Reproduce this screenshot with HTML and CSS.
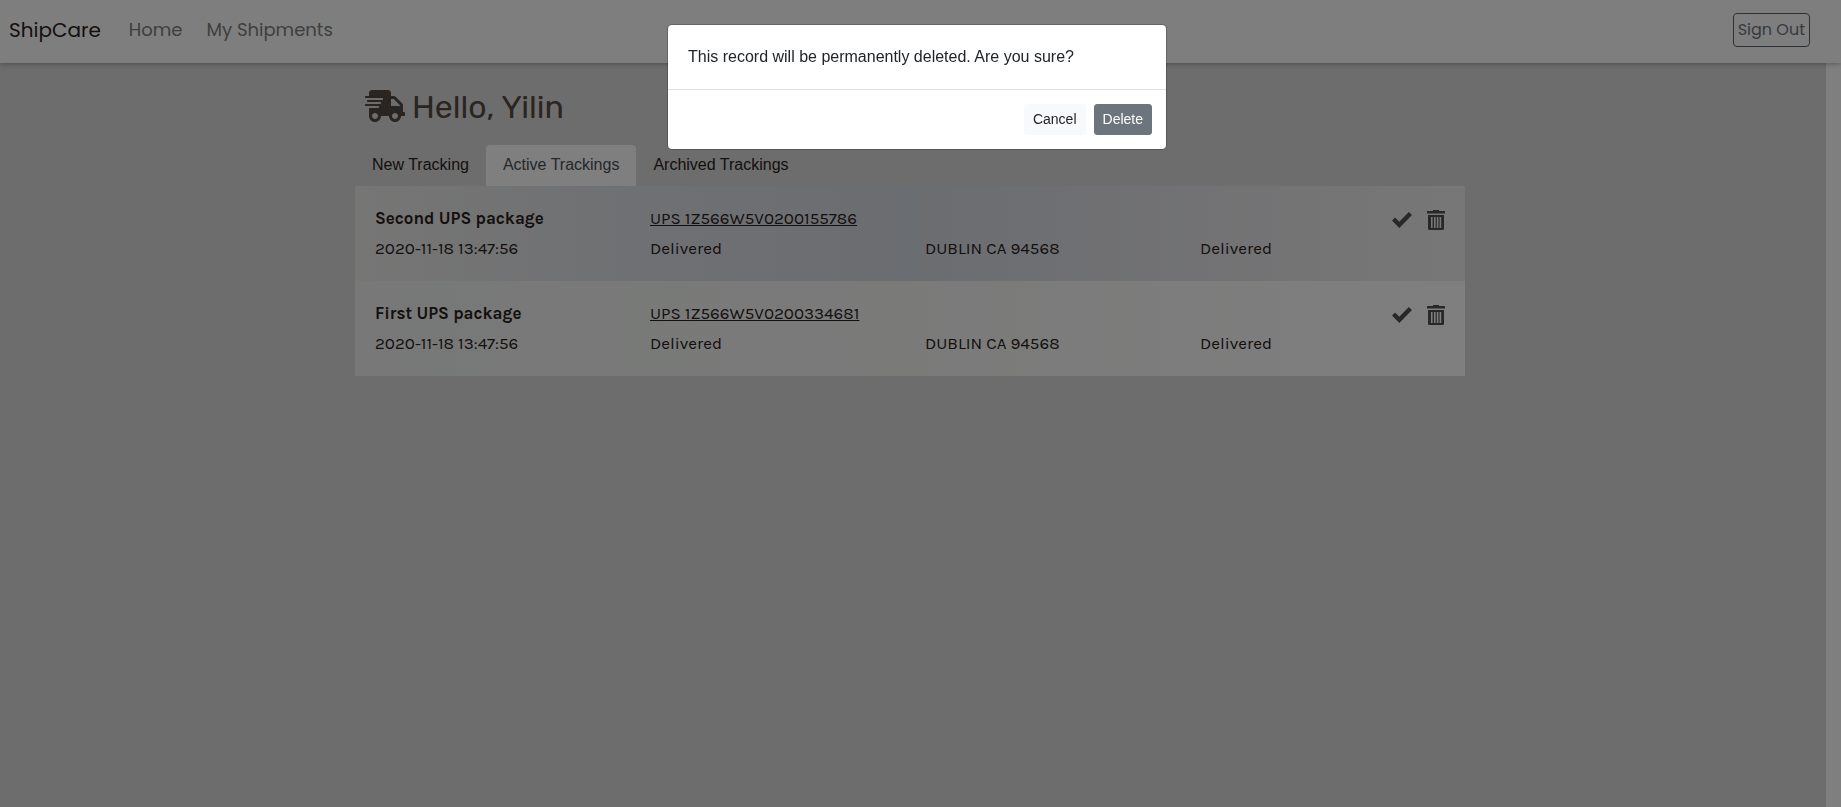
FILE: index.html
```html
<!DOCTYPE html>
<html lang="en">
<head>
<meta charset="utf-8">
<title>ShipCare</title>
<link rel="stylesheet" href="styles.css">
</head>
<body>
<svg class="sprite" aria-hidden="true">
  <symbol id="check" viewBox="0 0 20 16"><path d="M0 8.5 3 5.5 7.3 9.8 16.8 0 20 3 7.3 16Z"/></symbol>
  <symbol id="trash" viewBox="0 0 18 20"><path fill-rule="evenodd" d="M0 1h6V0h6v1h6V3.500H0ZM1 5h16v13.500a1.500 1.500 0 0 1-1.500 1.500h-13A1.500 1.500 0 0 1 1 18.500ZM4 7V18H5.600V7ZM7 7V18H8.600V7ZM9.800 7V18H11.400V7ZM12.600 7V18H14.200V7Z"/></symbol>
</svg>
<header class="navbar">
  <a class="brand" href="#">ShipCare</a>
  <nav class="links">
    <a href="#">Home</a>
    <a href="#">My Shipments</a>
  </nav>
  <button class="sign-out" type="button">Sign Out</button>
</header>
<main class="page">
  <div class="container">
    <h1 class="greeting">
      <svg class="truck" viewBox="0 0 640 512" aria-hidden="true"><path d="M624 352h-16V243.900c0-12.700-5.100-24.900-14.100-33.900L494 110.100c-9-9-21.200-14.100-33.900-14.100H416V48c0-26.500-21.500-48-48-48H112C85.500 0 64 21.500 64 48v48H8c-4.400 0-8 3.600-8 8v16c0 4.400 3.600 8 8 8h272c4.400 0 8 3.600 8 8v16c0 4.400-3.600 8-8 8H40c-4.400 0-8 3.600-8 8v16c0 4.400 3.600 8 8 8h208c4.400 0 8 3.600 8 8v16c0 4.400-3.600 8-8 8H8c-4.400 0-8 3.600-8 8v16c0 4.400 3.600 8 8 8h208c4.400 0 8 3.600 8 8v16c0 4.400-3.600 8-8 8H64v128c0 53 43 96 96 96s96-43 96-96h128c0 53 43 96 96 96s96-43 96-96h48c8.800 0 16-7.200 16-16v-32c0-8.800-7.200-16-16-16zM160 464c-26.500 0-48-21.500-48-48s21.500-48 48-48 48 21.500 48 48-21.500 48-48 48zm320 0c-26.500 0-48-21.500-48-48s21.500-48 48-48 48 21.500 48 48-21.500 48-48 48zm80-208H416V144h44.100l99.900 99.900V256z"/></svg>
      <span class="hello">Hello, Yilin</span>
    </h1>
    <nav class="tabs">
      <a class="tab" href="#">New Tracking</a>
      <a class="tab active" href="#">Active Trackings</a>
      <a class="tab" href="#">Archived Trackings</a>
    </nav>
    <article class="shipment shaded">
      <h2>Second UPS package</h2>
      <a class="number" href="#">UPS 1Z566W5V0200155786</a>
      <div class="actions">
        <button type="button" aria-label="Archive"><svg class="check"><use href="#check"/></svg></button>
        <button type="button" aria-label="Delete"><svg class="trash"><use href="#trash"/></svg></button>
      </div>
      <span>2020-11-18 13:47:56</span>
      <span>Delivered</span>
      <span>DUBLIN CA 94568</span>
      <span>Delivered</span>
    </article>
    <article class="shipment">
      <h2>First UPS package</h2>
      <a class="number" href="#">UPS 1Z566W5V0200334681</a>
      <div class="actions">
        <button type="button" aria-label="Archive"><svg class="check"><use href="#check"/></svg></button>
        <button type="button" aria-label="Delete"><svg class="trash"><use href="#trash"/></svg></button>
      </div>
      <span>2020-11-18 13:47:56</span>
      <span>Delivered</span>
      <span>DUBLIN CA 94568</span>
      <span>Delivered</span>
    </article>
  </div>
</main>
<div class="backdrop">
  <div class="modal" role="dialog" aria-modal="true" aria-labelledby="message">
    <p class="modal-body" id="message">This record will be permanently deleted. Are you sure?</p>
    <div class="modal-footer">
      <button class="btn light" type="button">Cancel</button>
      <button class="btn secondary" type="button">Delete</button>
    </div>
  </div>
</div>
</body>
</html>
```
FILE: styles.css
```css
* { box-sizing: border-box; }
body {
  margin: 0;
  min-height: 100vh;
  display: flex;
  flex-direction: column;
  background: #fff;
  color: #212529;
  font: 16px/24px "Liberation Sans", Arial, sans-serif;
}
a { color: inherit; text-decoration: none; }
button { font: inherit; cursor: pointer; }
.sprite { display: none; }

.navbar {
  position: relative;
  display: flex;
  align-items: center;
  height: 63px;
  padding: 0 31px 4px 9px;
  background: #fcfcfc;
  box-shadow: 0 1px 5px rgba(0, 0, 0, .3);
  font-family: Poppins, Inter, sans-serif;
}
.brand { font-size: 20px; color: #2b211c; }
.links {
  display: flex;
  gap: 24px;
  margin: 0 auto 0 28px;
  font-size: 18px;
  color: #7c7c7c;
}
.sign-out {
  height: 34px;
  padding: 0 4px;
  border: 1px solid #5c646c;
  border-radius: 4px;
  background: none;
  color: #6c757d;
}

.page {
  flex: 1;
  margin-right: 15px;
  padding: 23px 6px 0 0;
  background: #dadada;
}
.container { max-width: 1110px; margin: 0 auto; }
.greeting {
  display: flex;
  align-items: center;
  gap: 7px;
  margin: 0 0 19px;
  padding-left: 10px;
  color: #544a43;
  font: 400 32px/38px Rubik, Inter, sans-serif;
}
.hello { padding-top: 2px; }
.truck { width: 40px; height: 32px; fill: currentColor; }
.tabs { display: flex; }
.tab {
  padding: 7px 16px 9px;
  border: 1px solid transparent;
  border-bottom: 0;
  border-radius: 4px 4px 0 0;
  color: #2b211c;
}
.tab.active { background: #fff; color: #495057; }

.shipment {
  display: grid;
  grid-template-columns: repeat(3, 275px) 1fr;
  row-gap: 6px;
  padding: 20px 20px 21px;
  background: linear-gradient(90deg, #eef1ef, #f4f6f3 50%, #fefefe);
  color: #2b211c;
  font: 17px/24px Karla, Inter, sans-serif;
}
.shipment.shaded {
  background: linear-gradient(90deg, #ececea, #dfe1e6 25%, #d5dae2 50%, #dfe0e6 65%, #f0efee);
}
.shipment h2 { margin: 0; font-size: 17px; line-height: 24px; font-weight: 700; }
.number { text-decoration: underline; }
.actions {
  grid-column: 3 / 5;
  display: flex;
  justify-content: flex-end;
  align-items: center;
  gap: 15px;
  padding-top: 4px;
}
.actions button { display: flex; padding: 0; border: 0; background: none; color: #505050; }
.actions svg { fill: currentColor; }
.check { width: 20px; height: 16px; }
.trash { width: 18px; height: 20px; }

.backdrop {
  position: fixed;
  inset: 0;
  padding: 24px 7px 0 0;
  background: rgba(0, 0, 0, .5);
}
.modal {
  max-width: 500px;
  margin: 0 auto;
  border: 1px solid rgba(0, 0, 0, .2);
  border-radius: 5px;
  background: #fff;
  background-clip: padding-box;
}
.modal-body { margin: 0; padding: 20px; }
.modal-footer {
  display: flex;
  justify-content: flex-end;
  gap: 8px;
  padding: 14px;
  border-top: 1px solid #dee2e6;
}
.btn {
  padding: 4px 8px;
  border: 1px solid;
  border-radius: 3px;
  font-size: 14px;
  line-height: 21px;
}
.btn.light { background: #f8f9fa; border-color: #f8f9fa; color: #212529; }
.btn.secondary { background: #6c757d; border-color: #6c757d; color: #fff; }
```
